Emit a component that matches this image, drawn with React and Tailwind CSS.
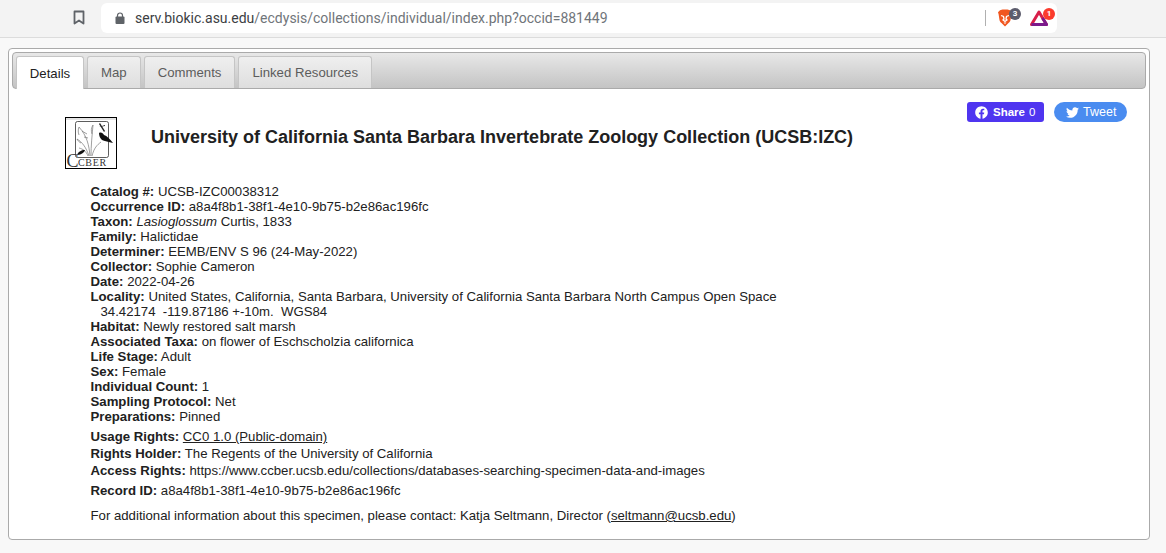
import React from 'react';
import { FaFacebook, FaTwitter } from 'react-icons/fa';

const Field = ({ label, children }) => (
  <div>
    <b>{label}</b> {children}
  </div>
);

const BookmarkIcon = () => (
  <svg width="12" height="15" viewBox="0 0 12 15" fill="none" stroke="#5f6368" strokeWidth="1.8">
    <path d="M1.5 1.5h9v12L6 10.5l-4.500 3z" strokeLinejoin="round" />
  </svg>
);

const LockIcon = () => (
  <svg width="10" height="12" viewBox="0 0 10 12" fill="#5f6368">
    <rect x="0.5" y="4.500" width="9" height="7.500" rx="1" />
    <path d="M2.500 5V3.500a2.500 2.500 0 0 1 5 0V5" fill="none" stroke="#5f6368" strokeWidth="1.200" />
  </svg>
);

const BraveIcon = () => (
  <div className="relative w-[24px] h-[20px]">
    <svg width="16" height="18" viewBox="0 0 15 18" className="mt-[1px]">
      <path d="M2.500 1.200 5 .5h5l2.500.7 2 2.100-.6 2L13 11c-.3 1.500-1 2.300-2 3l-3.500 3.500L4 14c-1-.7-1.700-1.500-2-3L1.100 5.300.5 3.300z" fill="#f1561f" />
      <path d="M3.500 6.500 6 7.500l.5 2.500-1 1 2 1.500 2-1.500-1-1L9 7.500l2.500-1" fill="none" stroke="#fff" strokeWidth="1.300" />
      <path d="M6 13.500h3l-1.500 1.500z" fill="#fff" />
    </svg>
    <span className="absolute left-[12px] top-0 w-[12px] h-[12px] rounded-full bg-[#5c5c6c] text-white text-[8px] leading-[12px] text-center font-bold">3</span>
  </div>
);

const RewardsIcon = () => (
  <div className="relative w-[25px] h-[20px]">
    <svg width="18" height="16" viewBox="0 0 18 16" className="mt-[2px]">
      <path d="M9 2 16.500 14.500H1.500z" fill="none" stroke="#d81f4a" strokeWidth="3" strokeLinejoin="round" />
      <path d="M1.500 14.500h15L12.500 8" fill="none" stroke="#7b1a8c" strokeWidth="3" strokeLinejoin="round" />
    </svg>
    <span className="absolute left-[13px] top-0 w-[12px] h-[12px] rounded-full bg-[#fb3b2e] text-white text-[8px] leading-[12px] text-center font-bold">1</span>
  </div>
);

const CcberLogo = () => (
  <div className="w-[52px] h-[52px] border border-black bg-white shrink-0">
    <svg width="50" height="50" viewBox="0 0 50 50" className="overflow-visible">
      <rect x="0" y="0" width="50" height="2" fill="#e4e4e4" />
      <rect x="9.500" y="3.500" width="33" height="36" rx="2" fill="none" stroke="#333" strokeWidth="0.800" />
      <g stroke="#777" strokeWidth="0.700" fill="none">
        <path d="M24 38C23 27 21 18 13 9" />
        <path d="M25 38C25 28 26 18 27 7" />
        <path d="M23 38C20 29 16 24 11 21" />
        <path d="M26 38c2-8 5-11 9-14" />
        <path d="M22 38c-2-5-5-7-9-8" />
        <path d="M13 9c-1 3-1 5 0 8M27 7c-2 3-2 6-1 9M11 21c1 2 2 3 4 4M16 13l5 3M18 19l4 1" />
      </g>
      <path d="M33 15c2-1 4 0 5 2 3 1 6 4 9 8-4-1-9-2-11-3-2-2-3-4-3-7z" fill="#111" />
      <path d="M34 5l5 8-1 1-5-8zM33 9l6-2v1z" fill="#222" />
      <path d="M11 37c1-3 4-5 8-5l-1 2c-2 2-4 3-7 3z" fill="#111" />
      <text x="0.500" y="48.500" fontFamily="Liberation Serif, serif" fontSize="18" fill="#333">C</text>
      <text x="12" y="47.500" fontFamily="Liberation Serif, serif" fontSize="10" letterSpacing="0.700" fill="#333">CBER</text>
    </svg>
  </div>
);

export default function App() {
  const tabs = ['Map', 'Comments', 'Linked Resources'];

  return (
    <div className="w-[1166px] h-[553px] overflow-hidden bg-[#f8f8f8] text-[13.2px] leading-[15px] text-[#212121] font-['Liberation_Sans',Arial,sans-serif]">
      {/* browser bar */}
      <div className="h-[38px] bg-[#f3f3f3] border-b border-[#dcdcdc] flex pt-[3px]">
        <div className="w-[101px] flex justify-end pr-[16px] pt-[7px]">
          <BookmarkIcon />
        </div>
        <div className="w-[956px] h-[30px] bg-white rounded-[6px] flex items-center pl-[14px] pr-[2px] font-['Roboto','Noto_Sans',sans-serif] text-[14px]">
          <LockIcon />
          <span className="ml-[10px] text-[#3c4043]">serv.biokic.asu.edu</span>
          <span className="text-[#70757a]">/ecdysis/collections/individual/index.php?occid=881449</span>
          <div className="ml-auto flex items-center">
            <div className="w-px h-[16px] bg-[#b0b0b0] mr-[11px]" />
            <BraveIcon />
            <div className="w-[9px]" />
            <RewardsIcon />
          </div>
        </div>
      </div>

      {/* card */}
      <div className="mx-[8px] mt-[10px] h-[492px] w-[1142px] bg-white border border-[#aaaaaa] rounded-[4px] p-[3px]">
        <div className="h-[37px] border border-[#aaaaaa] rounded-[4px] bg-gradient-to-b from-[#e8e8e8] to-[#c4c4c4] pl-[3px] pt-[3px] flex gap-[3px]">
          <div className="h-[33px] w-[68px] bg-white border border-b-0 border-[#c5c5c5] rounded-t-[3px] flex items-center justify-center text-[#212121] relative">
            Details
          </div>
          {tabs.map((tab) => (
            <div
              key={tab}
              className="h-[32px] px-[13px] bg-gradient-to-b from-[#efefef] to-[#dedede] border border-b-0 border-[#c5c5c5] rounded-t-[3px] flex items-center text-[#5c5c5c]"
            >
              {tab}
            </div>
          ))}
        </div>

        <div className="relative">
          <div className="absolute right-[19px] top-[13px] flex gap-[10px] text-[11.500px] text-white">
            <div className="w-[77px] h-[20px] bg-[#4f35f0] rounded-[3px] flex items-center pl-[8px]">
              <FaFacebook size={13} />
              <b className="ml-[5px]">Share</b>
              <span className="ml-[4px]">0</span>
            </div>
            <div className="w-[73px] h-[20px] bg-[#4a8cf0] rounded-full flex items-center pl-[12px] text-[12.500px]">
              <FaTwitter size={13} />
              <span className="ml-[4px]">Tweet</span>
            </div>
          </div>

          <div className="flex pl-[53px] pt-[28px]">
            <CcberLogo />
            <h1 className="ml-[34px] mt-[10px] font-bold text-[18px] leading-[21px]">
              University of California Santa Barbara Invertebrate Zoology Collection (UCSB:IZC)
            </h1>
          </div>

          <div className="pl-[78.500px] pt-[15px]">
            <Field label="Catalog #:">UCSB-IZC00038312</Field>
            <Field label="Occurrence ID:">a8a4f8b1-38f1-4e10-9b75-b2e86ac196fc</Field>
            <Field label="Taxon:"><i>Lasioglossum</i> Curtis, 1833</Field>
            <Field label="Family:">Halictidae</Field>
            <Field label="Determiner:">EEMB/ENV S 96 (24-May-2022)</Field>
            <Field label="Collector:">Sophie Cameron</Field>
            <Field label="Date:">2022-04-26</Field>
            <Field label="Locality:">United States, California, Santa Barbara, University of California Santa Barbara North Campus Open Space</Field>
            <div className="pl-[10px] whitespace-pre">34.42174  -119.87186 +-10m.  WGS84</div>
            <Field label="Habitat:">Newly restored salt marsh</Field>
            <Field label="Associated Taxa:">on flower of Eschscholzia californica</Field>
            <Field label="Life Stage:">Adult</Field>
            <Field label="Sex:">Female</Field>
            <Field label="Individual Count:">1</Field>
            <Field label="Sampling Protocol:">Net</Field>
            <Field label="Preparations:">Pinned</Field>

            <div className="mt-[5px] flex flex-col gap-[2px]">
              <Field label="Usage Rights:"><a className="underline">CC0 1.0 (Public-domain)</a></Field>
              <Field label="Rights Holder:">The Regents of the University of California</Field>
              <Field label="Access Rights:">https://www.ccber.ucsb.edu/collections/databases-searching-specimen-data-and-images</Field>
            </div>
            <div className="mt-[5px]">
              <Field label="Record ID:">a8a4f8b1-38f1-4e10-9b75-b2e86ac196fc</Field>
            </div>
            <div className="mt-[10px]">
              For additional information about this specimen, please contact: Katja Seltmann, Director (<a className="underline">seltmann@ucsb.edu</a>)
            </div>
          </div>
        </div>
      </div>
    </div>
  );
}
